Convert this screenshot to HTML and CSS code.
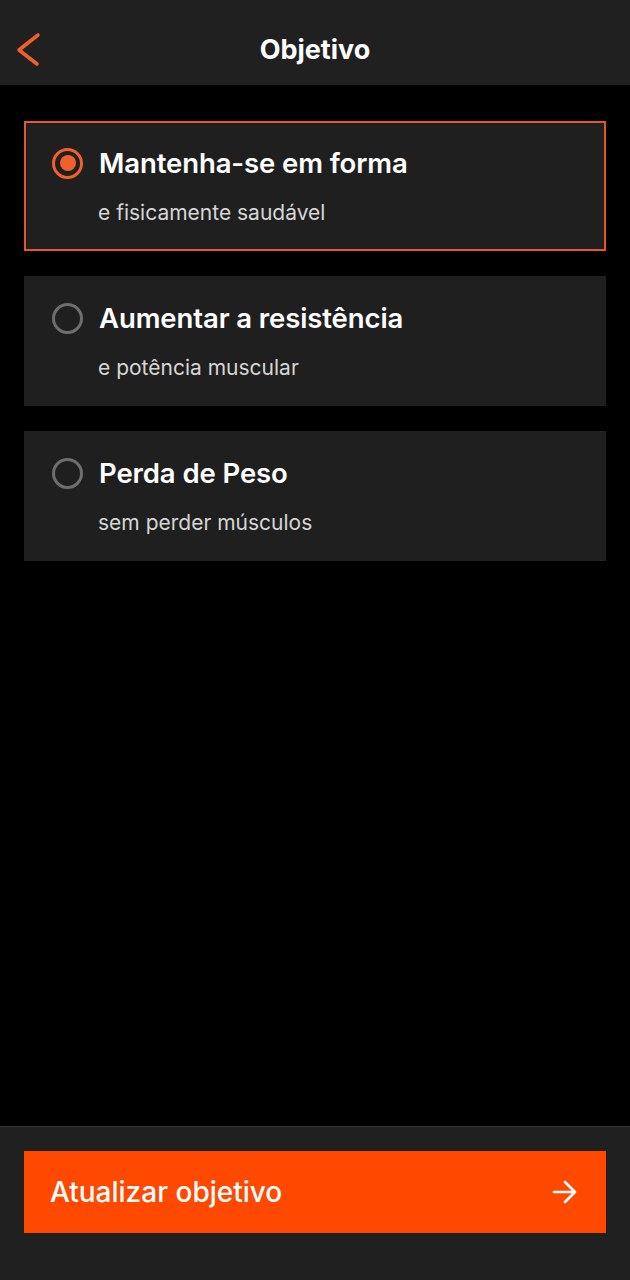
FILE: index.html
```html
<!DOCTYPE html>
<html lang="pt">
<head>
    <meta charset="UTF-8">
    <meta name="viewport" content="width=device-width, initial-scale=1.0">
    <title>Objetivo</title>
    <link rel="stylesheet" href="styles.css">
</head>
<body>
    <div class="app">
        <!-- Header -->
        <div class="header">
            <a href="#" class="back-btn">
                <svg width="30" height="40" viewBox="0 0 30 40">
                    <path d="M24 5 L5 20 L23 34" fill="none" stroke="#f0602a" stroke-width="3.6" stroke-linecap="round" stroke-linejoin="round"/>
                </svg>
            </a>
            <h1>Objetivo</h1>
        </div>

        <!-- Goal options -->
        <div class="options">
            <div class="option selected">
                <div class="option-row">
                    <span class="radio"></span>
                    <h2>Mantenha-se em forma</h2>
                </div>
                <p>e fisicamente saudável</p>
            </div>
            <div class="option">
                <div class="option-row">
                    <span class="radio"></span>
                    <h2>Aumentar a resistência</h2>
                </div>
                <p>e potência muscular</p>
            </div>
            <div class="option">
                <div class="option-row">
                    <span class="radio"></span>
                    <h2>Perda de Peso</h2>
                </div>
                <p>sem perder músculos</p>
            </div>
        </div>

        <!-- Footer -->
        <div class="footer">
            <a href="#" class="update-btn">
                <span>Atualizar objetivo</span>
                <svg width="26" height="26" viewBox="0 0 26 26">
                    <path d="M2 13 H23 M13 3 L23 13 L13 23" fill="none" stroke="white" stroke-width="2.6" stroke-linecap="round" stroke-linejoin="round"/>
                </svg>
            </a>
        </div>
    </div>
</body>
</html>
```

FILE: styles.css
```css
* {
    margin: 0;
    padding: 0;
    box-sizing: border-box;
    font-family: Inter, "Noto Sans", sans-serif;
}
body {
    background: #000;
    color: white;
}
.app {
    display: flex;
    flex-direction: column;
    height: 100vh;
}
.header {
    position: relative;
    height: 85px;
    background: #202020;
    display: flex;
    justify-content: center;
    align-items: center;
    padding-top: 14px;
}
.header h1 {
    font-size: 27px;
    font-weight: 700;
}
.back-btn {
    position: absolute;
    left: 14px;
    top: 30px;
    display: block;
}
.options {
    flex: 1;
    padding: 36px 24px 0;
    display: flex;
    flex-direction: column;
    gap: 25px;
}
.option {
    height: 130px;
    background: #1f1f1f;
    padding: 23px 26px 0 26px;
    border: 2px solid transparent;
}
.option.selected {
    border-color: #e8552a;
}
.option-row {
    display: flex;
    align-items: center;
    gap: 16px;
    height: 34px;
}
.option-row h2 {
    font-size: 27.5px;
    font-weight: 600;
    letter-spacing: -0.1px;
}
.radio {
    width: 31px;
    height: 31px;
    border-radius: 50%;
    border: 3px solid #6e6e6e;
    display: flex;
    justify-content: center;
    align-items: center;
}
.selected .radio {
    border-color: #f0602a;
}
.selected .radio::after {
    content: "";
    width: 16px;
    height: 16px;
    border-radius: 50%;
    background: #f0602a;
}
.option p {
    margin: 20px 0 0 46px;
    font-size: 21px;
    color: #d6d6d6;
}
.footer {
    height: 154px;
    background: #202020;
    border-top: 1px solid #363636;
    padding: 24px 24px 0;
}
.update-btn {
    height: 82px;
    background: #ff4800;
    display: flex;
    justify-content: space-between;
    align-items: center;
    padding: 0 28px 0 26px;
    color: white;
    text-decoration: none;
    font-size: 28px;
    font-weight: 500;
}
```
